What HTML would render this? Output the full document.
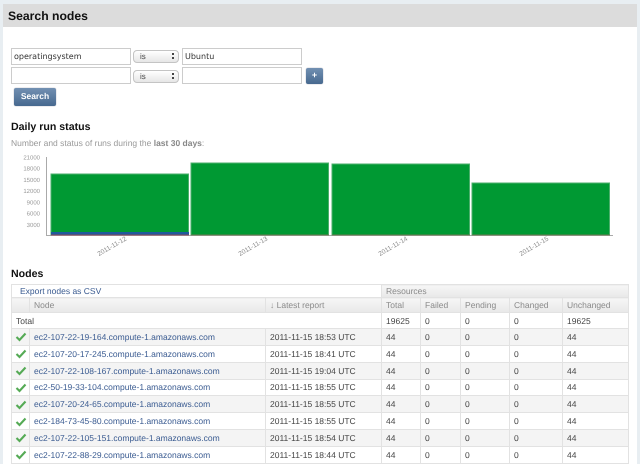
<!DOCTYPE html>
<html><head><meta charset="utf-8">
<style>
html,body{margin:0;padding:0;width:640px;height:464px;overflow:hidden;background:#e8eef2;font-family:"Liberation Sans",sans-serif;text-rendering:geometricPrecision;}
#wrap{position:absolute;left:3px;top:4px;width:634px;height:460px;background:#fff;overflow:hidden;}
#page{position:absolute;left:0;top:0;width:640px;height:464px;filter:blur(0.35px);}
.abs{position:absolute;}
.hd{left:3px;top:4px;width:634px;height:23px;background:#dcdcdc;}
h1{position:absolute;margin:0;left:8px;top:8px;font-size:12.2px;line-height:16px;font-weight:bold;color:#111;}
h2{position:absolute;margin:0;left:11px;font-size:10.6px;line-height:14px;font-weight:bold;color:#111;}
.in{position:absolute;box-sizing:border-box;width:120px;height:17px;background:#fff;border:1px solid #ccc;line-height:15px;padding-left:2px;color:#333;font-family:"DejaVu Sans",sans-serif;font-size:8px;}
.sel{position:absolute;box-sizing:border-box;left:133px;width:46px;height:13px;border:1px solid #c4c4c4;border-radius:4px;background:linear-gradient(#fff,#e6e6e6);font-size:8px;line-height:11px;color:#444;padding-left:6px;}
.sel:after{content:"";position:absolute;right:4px;top:2px;width:2px;height:2px;background:#444;box-shadow:0 4px 0 #444;}
.btn{position:absolute;box-sizing:border-box;border-radius:2px;background:linear-gradient(#7290b2,#47698f);color:#fff;font-weight:bold;text-align:center;box-shadow:0 0 1px #889;}
.sub{position:absolute;left:11px;top:137px;font-size:8.5px;line-height:12px;color:#999;}
.sub b{color:#888;}
table{position:absolute;left:11px;top:284px;width:617px;table-layout:fixed;border-collapse:collapse;font-size:8.5px;color:#444;}
td,th{border:1px solid #e2e2e2;padding:0 0 0 4px;overflow:hidden;white-space:nowrap;font-weight:normal;text-align:left;box-sizing:border-box;}
th{background:linear-gradient(#f6f6f6,#e8e8e8);color:#8a8a8a;}
a{color:#3a5b91;text-decoration:none;}
tr.o td{background:#f4f4f4;}
tr.r{height:16.85px;}
td.ic{padding:0;text-align:center;}
td.ic svg{display:block;margin:0 0 0 3px;}
</style></head><body>
<div id="wrap"></div>
<div id="page">
<div class="abs hd"></div>
<h1>Search nodes</h1>

<div class="in" style="left:11px;top:48px;">operatingsystem</div>
<div class="sel" style="top:50px;">is</div>
<div class="in" style="left:182px;top:48px;">Ubuntu</div>
<div class="in" style="left:11px;top:67px;"></div>
<div class="sel" style="top:70px;">is</div>
<div class="in" style="left:182px;top:67px;"></div>
<div class="btn" style="left:306px;top:68px;width:17px;height:16px;font-size:9px;line-height:15px;">+</div>
<div class="btn" style="left:14px;top:88px;width:42px;height:18px;font-size:8.5px;line-height:17px;">Search</div>

<h2 style="top:120px;">Daily run status</h2>
<div class="sub">Number and status of runs during the <b>last 30 days</b>:</div>

<svg class="abs" style="left:0;top:150px;" width="640" height="115" viewBox="0 150 640 115">
<g fill="#999" font-family="Liberation Sans" font-size="6" text-anchor="end">
<text x="40" y="159.5">21000</text><text x="40" y="170.5">18000</text><text x="40" y="182">15000</text><text x="40" y="193">12000</text><text x="40" y="204.5">9000</text><text x="40" y="215.5">6000</text><text x="40" y="227">3000</text>
</g>
<path d="M46.5 157V235.5H613" fill="none" stroke="#aaa" stroke-width="1"/>
<g fill="#009933" stroke="#4caf6c" stroke-width="1">
<rect x="51" y="174" width="137.5" height="61"/>
<rect x="191" y="163" width="137.5" height="72"/>
<rect x="332" y="164" width="137.5" height="71"/>
<rect x="472" y="183" width="137.5" height="52"/>
</g>
<rect x="51" y="232" width="138" height="2.5" fill="#1f5a9c"/>
<rect x="51" y="234.5" width="138" height="1" fill="#8a4a5a"/>
<rect x="191" y="234.5" width="138" height="1" fill="#6a7a50"/>
<rect x="332" y="234.5" width="138" height="1" fill="#6a7a50"/>
<rect x="472" y="234.5" width="138" height="1" fill="#6a7a50"/>
<g fill="#888" font-family="Liberation Sans" font-size="6.5" text-anchor="middle">
<text transform="translate(113 248) rotate(-30)">2011-11-12</text>
<text transform="translate(254 248) rotate(-30)">2011-11-13</text>
<text transform="translate(394 248) rotate(-30)">2011-11-14</text>
<text transform="translate(535 248) rotate(-30)">2011-11-15</text>
</g>
</svg>

<h2 style="top:267px;">Nodes</h2>

<table>
<colgroup><col style="width:18px"><col style="width:236px"><col style="width:116px"><col style="width:39px"><col style="width:40px"><col style="width:49px"><col style="width:53px"><col style="width:66px"></colgroup>
<tr style="height:13px"><td colspan="3" style="padding-left:8px"><a>Export nodes as CSV</a></td><th colspan="5">Resources</th></tr>
<tr style="height:15px"><th></th><th>Node</th><th>↓ Latest report</th><th>Total</th><th>Failed</th><th>Pending</th><th>Changed</th><th>Unchanged</th></tr>
<tr style="height:16px"><td colspan="3">Total</td><td>19625</td><td>0</td><td>0</td><td>0</td><td>19625</td></tr>
<tr class="r o"><td class="ic"><svg width="12" height="11" viewBox="0 0 12 11"><path d="M1.5 6L4.5 9L10.5 2.5" fill="none" stroke="#55aa55" stroke-width="2.1"/></svg></td><td><a>ec2-107-22-19-164.compute-1.amazonaws.com</a></td><td>2011-11-15 18:53 UTC</td><td>44</td><td>0</td><td>0</td><td>0</td><td>44</td></tr>
<tr class="r"><td class="ic"><svg width="12" height="11" viewBox="0 0 12 11"><path d="M1.5 6L4.5 9L10.5 2.5" fill="none" stroke="#55aa55" stroke-width="2.1"/></svg></td><td><a>ec2-107-20-17-245.compute-1.amazonaws.com</a></td><td>2011-11-15 18:41 UTC</td><td>44</td><td>0</td><td>0</td><td>0</td><td>44</td></tr>
<tr class="r o"><td class="ic"><svg width="12" height="11" viewBox="0 0 12 11"><path d="M1.5 6L4.5 9L10.5 2.5" fill="none" stroke="#55aa55" stroke-width="2.1"/></svg></td><td><a>ec2-107-22-108-167.compute-1.amazonaws.com</a></td><td>2011-11-15 19:04 UTC</td><td>44</td><td>0</td><td>0</td><td>0</td><td>44</td></tr>
<tr class="r"><td class="ic"><svg width="12" height="11" viewBox="0 0 12 11"><path d="M1.5 6L4.5 9L10.5 2.5" fill="none" stroke="#55aa55" stroke-width="2.1"/></svg></td><td><a>ec2-50-19-33-104.compute-1.amazonaws.com</a></td><td>2011-11-15 18:55 UTC</td><td>44</td><td>0</td><td>0</td><td>0</td><td>44</td></tr>
<tr class="r o"><td class="ic"><svg width="12" height="11" viewBox="0 0 12 11"><path d="M1.5 6L4.5 9L10.5 2.5" fill="none" stroke="#55aa55" stroke-width="2.1"/></svg></td><td><a>ec2-107-20-24-65.compute-1.amazonaws.com</a></td><td>2011-11-15 18:55 UTC</td><td>44</td><td>0</td><td>0</td><td>0</td><td>44</td></tr>
<tr class="r"><td class="ic"><svg width="12" height="11" viewBox="0 0 12 11"><path d="M1.5 6L4.5 9L10.5 2.5" fill="none" stroke="#55aa55" stroke-width="2.1"/></svg></td><td><a>ec2-184-73-45-80.compute-1.amazonaws.com</a></td><td>2011-11-15 18:55 UTC</td><td>44</td><td>0</td><td>0</td><td>0</td><td>44</td></tr>
<tr class="r o"><td class="ic"><svg width="12" height="11" viewBox="0 0 12 11"><path d="M1.5 6L4.5 9L10.5 2.5" fill="none" stroke="#55aa55" stroke-width="2.1"/></svg></td><td><a>ec2-107-22-105-151.compute-1.amazonaws.com</a></td><td>2011-11-15 18:54 UTC</td><td>44</td><td>0</td><td>0</td><td>0</td><td>44</td></tr>
<tr class="r"><td class="ic"><svg width="12" height="11" viewBox="0 0 12 11"><path d="M1.5 6L4.5 9L10.5 2.5" fill="none" stroke="#55aa55" stroke-width="2.1"/></svg></td><td><a>ec2-107-22-88-29.compute-1.amazonaws.com</a></td><td>2011-11-15 18:44 UTC</td><td>44</td><td>0</td><td>0</td><td>0</td><td>44</td></tr>
</table>
</div>
</body></html>
